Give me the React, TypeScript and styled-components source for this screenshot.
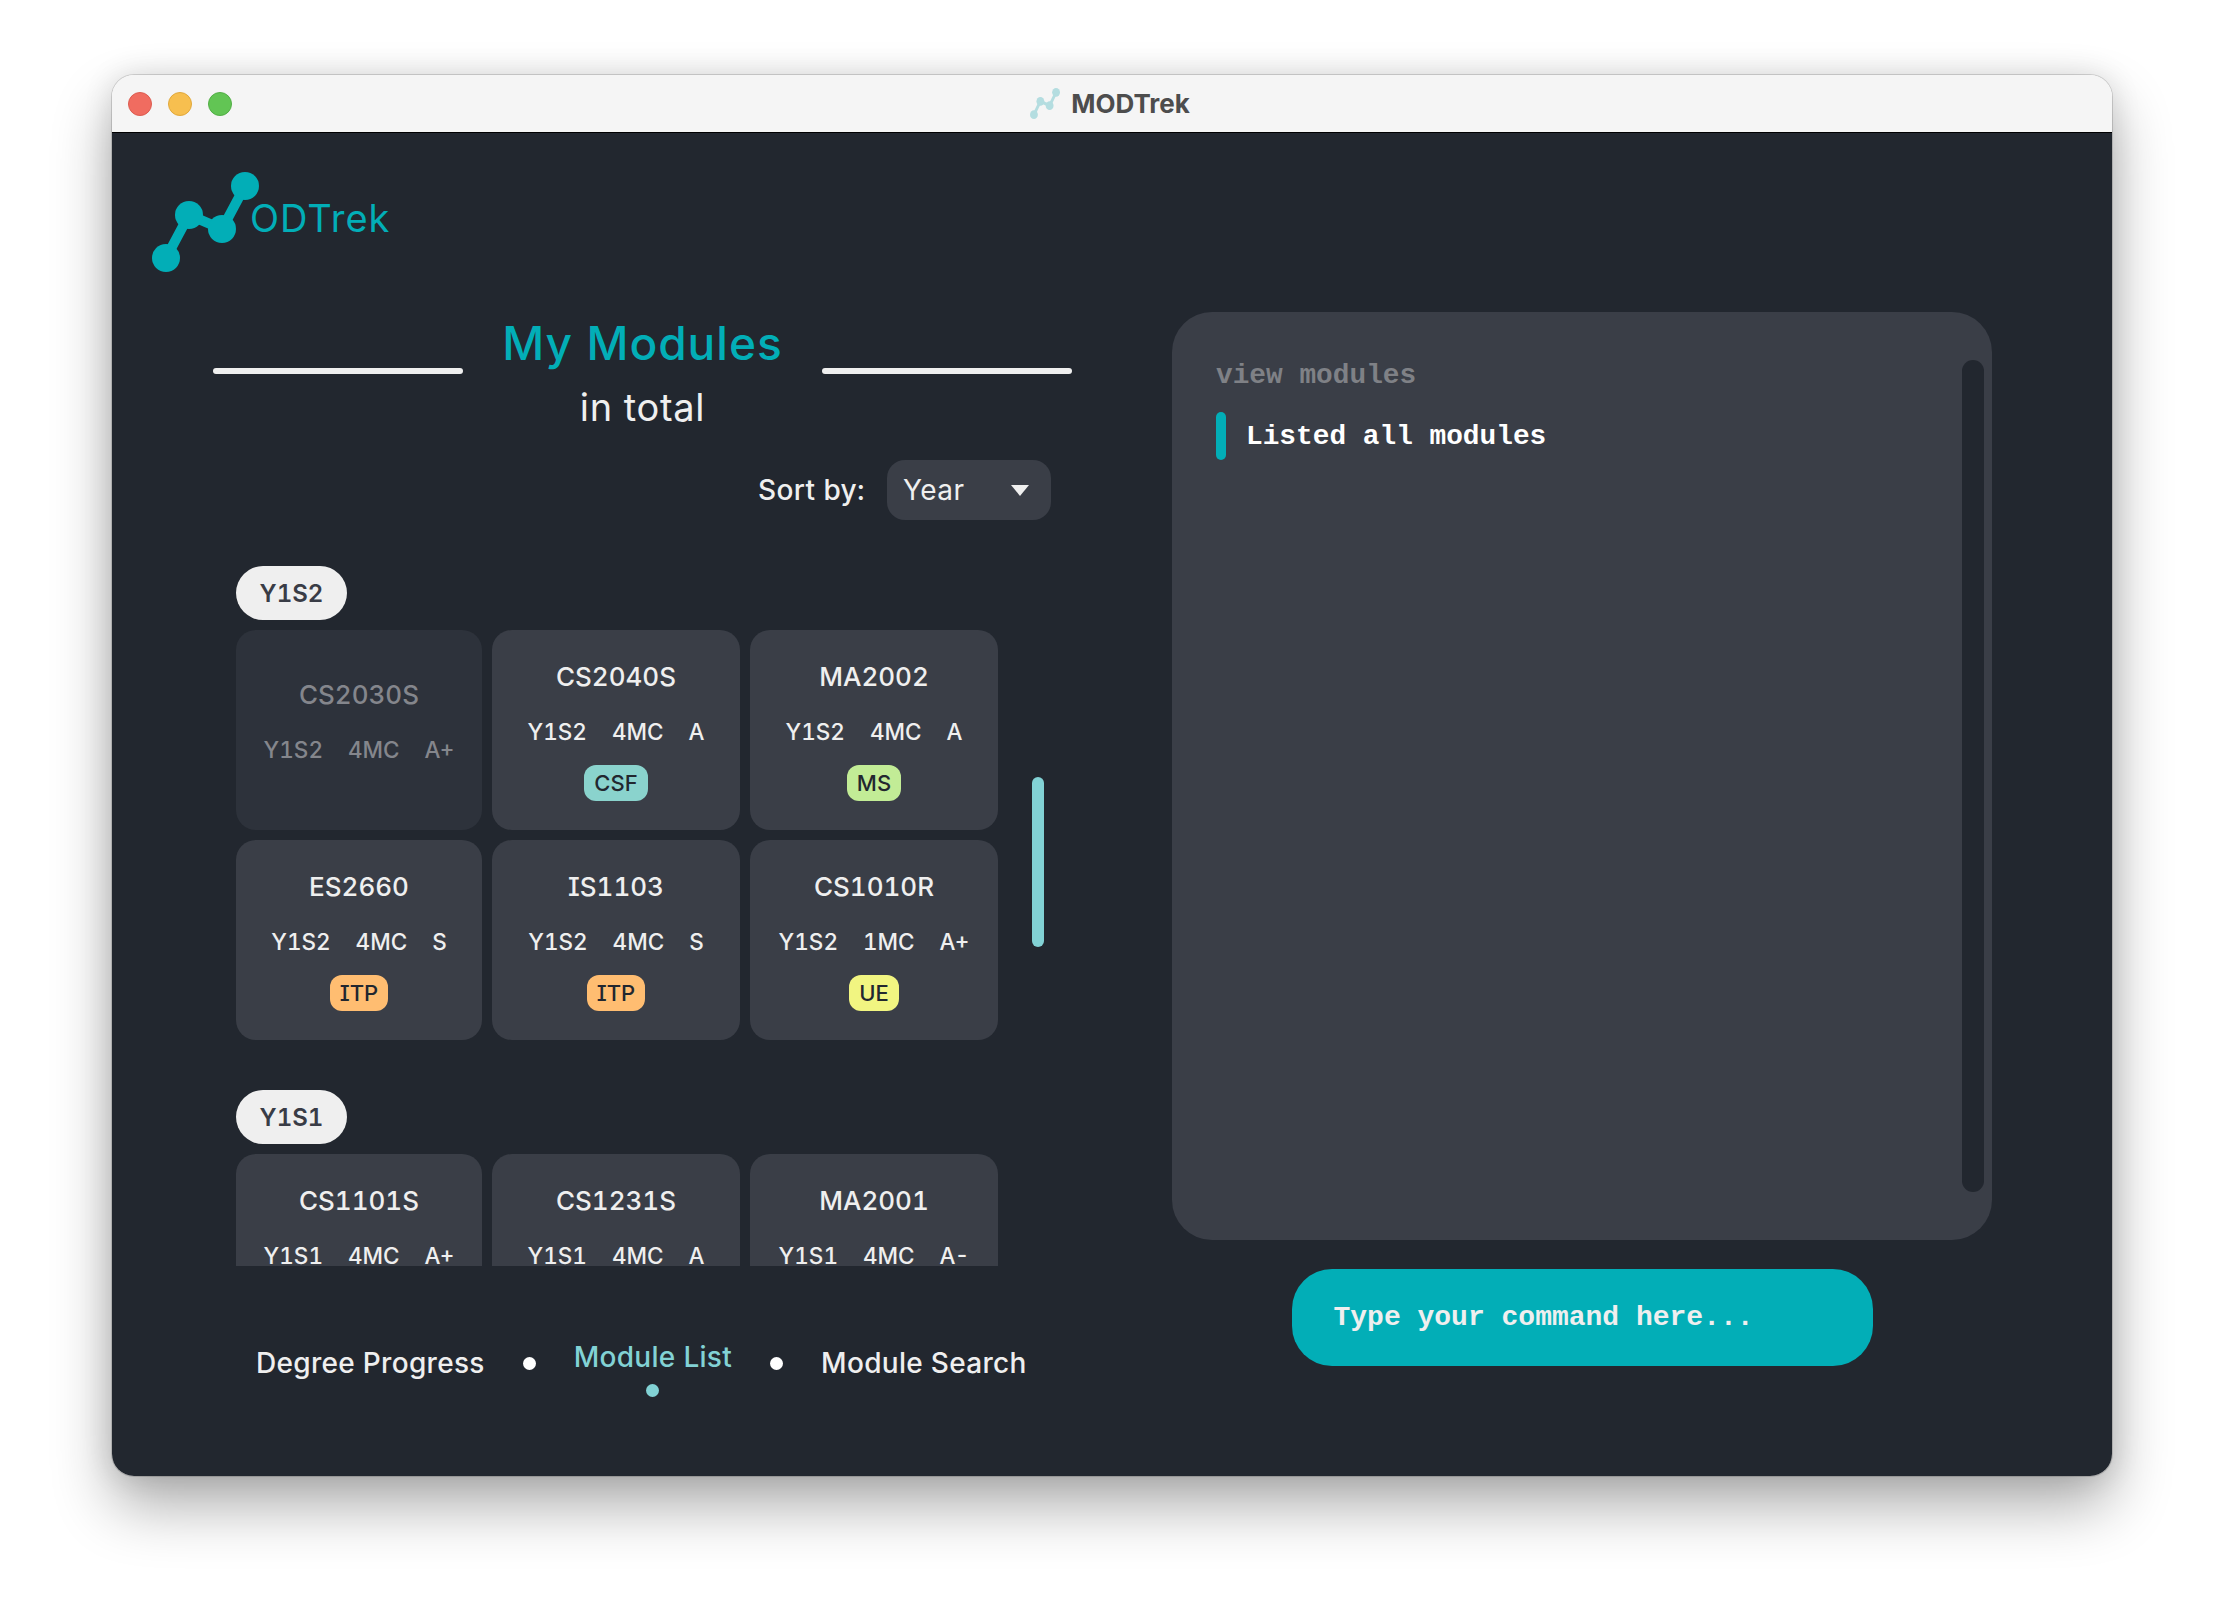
import React from "react";
import styled, { createGlobalStyle } from "styled-components";

const Global = createGlobalStyle`
  html, body { margin: 0; padding: 0; background: #ffffff; }
  body { width: 2224px; height: 1624px; overflow: hidden; font-family: Inter, "Noto Sans", sans-serif; font-feature-settings: "cv08", "tnum"; }
`;

const TEAL = "#02aeb7";
const PALE = "#82d2d5";
const BG = "#22272f";
const PANEL = "#3a3e47";
const MONO = `"Liberation Mono", "Courier New", monospace`;

const Desktop = styled.div`
  padding: 75px 0 0 112px;
`;
const Win = styled.div`
  width: 2000px;
  height: 1401px;
  border-radius: 22px;
  overflow: hidden;
  display: flex;
  flex-direction: column;
  box-shadow: 0 0 0 1px rgba(0, 0, 0, 0.14), 0 30px 60px rgba(0, 0, 0, 0.32), 0 0 30px rgba(0, 0, 0, 0.12);
`;
const TitleBar = styled.div`
  height: 57px;
  flex: none;
  background: #f5f5f5;
  border-bottom: 1px solid #000;
  display: grid;
  grid-template-columns: 1fr auto 1fr;
  align-items: center;
  padding: 0 16px;
`;
const Lights = styled.div`
  display: flex;
  gap: 16px;
`;
const Light = styled.span<{ $c: string; $b: string }>`
  width: 24px;
  height: 24px;
  box-sizing: border-box;
  border-radius: 50%;
  background: ${(p) => p.$c};
  border: 1px solid ${(p) => p.$b};
`;
const WinTitle = styled.div`
  display: flex;
  align-items: center;
  gap: 11px;
  padding-right: 4px;
  font-size: 26px;
  font-weight: 700;
  letter-spacing: 0;
  color: #4d4d4d;
`;
const Body = styled.div`
  flex: 1;
  background: ${BG};
  display: flex;
  min-height: 0;
`;
const LeftPane = styled.div`
  width: 1060px;
  flex: none;
  display: flex;
  flex-direction: column;
`;
const LogoRow = styled.div`
  height: 179px;
  flex: none;
  box-sizing: border-box;
  padding: 39px 0 0 40px;
  display: flex;
  align-items: flex-start;
`;
const LogoText = styled.div`
  font-size: 38px;
  font-weight: 400;
  letter-spacing: 1px;
  color: ${TEAL};
  line-height: 46px;
  margin: 23px 0 0 -9px;
`;
const Hero = styled.div`
  width: 859px;
  margin-left: 101px;
`;
const TitleRow = styled.div`
  display: flex;
  justify-content: space-between;
  align-items: flex-end;
  height: 62px;
`;
const Rule = styled.span`
  width: 250px;
  height: 6px;
  border-radius: 3px;
  background: #efefef;
`;
const Title = styled.h1`
  margin: 0;
  font-size: 46px;
  line-height: 62px;
  font-weight: 500;
  letter-spacing: 1px;
  color: ${TEAL};
`;
const Subtitle = styled.div`
  margin-top: 2px;
  height: 62px;
  line-height: 62px;
  text-align: center;
  font-size: 38px;
  font-weight: 400;
  letter-spacing: 0.7px;
  color: #efefef;
`;
const SortRow = styled.div`
  margin-top: 22px;
  padding-right: 21px;
  display: flex;
  justify-content: flex-end;
  align-items: center;
  gap: 22px;
  font-size: 28px;
  font-weight: 500;
  letter-spacing: 0.4px;
  color: #efefef;
`;
const Select = styled.div`
  width: 164px;
  height: 60px;
  box-sizing: border-box;
  padding: 0 22px 0 16px;
  border-radius: 18px;
  background: ${PANEL};
  display: flex;
  align-items: center;
  justify-content: space-between;
  font-weight: 400;
`;
const Caret = styled.span`
  width: 0;
  height: 0;
  border-left: 9px solid transparent;
  border-right: 9px solid transparent;
  border-top: 11px solid #efefef;
`;
const ScrollArea = styled.div`
  position: relative;
  margin: 46px 0 0 124px;
  height: 700px;
  overflow: hidden;
`;
const Thumb = styled.span`
  position: absolute;
  left: 796px;
  top: 211px;
  width: 12px;
  height: 170px;
  border-radius: 6px;
  background: ${PALE};
`;
const Group = styled.section`
  margin-bottom: 50px;
`;
const YearPill = styled.div`
  width: 111px;
  height: 54px;
  border-radius: 27px;
  background: #efefef;
  color: #393c46;
  font-size: 24px;
  font-weight: 600;
  display: flex;
  align-items: center;
  justify-content: center;
`;
const Grid = styled.div`
  margin-top: 10px;
  display: grid;
  grid-template-columns: 246px 248px 248px;
  grid-auto-rows: 200px;
  gap: 10px;
`;
const Card = styled.article<{ $done?: boolean }>`
  border-radius: 20px;
  background: ${(p) => (p.$done ? "#2d323b" : PANEL)};
  color: ${(p) => (p.$done ? "#84868c" : "#efefef")};
  display: flex;
  flex-direction: column;
  align-items: center;
  padding-top: ${(p) => (p.$done ? "46px" : "28px")};
  box-sizing: border-box;
`;
const Code = styled.div`
  font-size: 26px;
  line-height: 38px;
  font-weight: 500;
  letter-spacing: 0;
`;
const Meta = styled.div`
  margin-top: 16px;
  height: 38px;
  display: flex;
  gap: 25px;
  align-items: center;
  font-size: 22.5px;
  font-weight: 500;
  letter-spacing: 0;
`;
const Tag = styled.span<{ $c: string }>`
  margin-top: 15px;
  height: 36px;
  padding: 0 10px;
  border-radius: 12px;
  background: ${(p) => p.$c};
  color: #22272f;
  font-size: 22px;
  font-weight: 500;
  display: flex;
  align-items: center;
`;
const Tabs = styled.nav`
  margin: 71px 0 0 144px;
  display: flex;
  align-items: flex-start;
  gap: 38px;
`;
const Tab = styled.div<{ $active?: boolean }>`
  display: flex;
  flex-direction: column;
  align-items: center;
  gap: 7px;
  padding-top: ${(p) => (p.$active ? "0" : "6px")};
  font-size: 28px;
  letter-spacing: 0.3px;
  line-height: 40px;
  font-weight: 450;
  color: ${(p) => (p.$active ? PALE : "#efefef")};
`;
const Dot = styled.span<{ $c?: string; $sep?: boolean }>`
  width: 13px;
  height: 13px;
  border-radius: 50%;
  margin-top: ${(p) => (p.$sep ? "20px" : "0")};
  background: ${(p) => p.$c || "#ffffff"};
`;
const RightPane = styled.div`
  width: 820px;
  display: flex;
  flex-direction: column;
  align-items: center;
  padding-top: 179px;
`;
const Console = styled.div`
  position: relative;
  width: 820px;
  height: 928px;
  box-sizing: border-box;
  padding: 47px 44px 0;
  border-radius: 40px;
  background: ${PANEL};
  font-family: ${MONO};
  font-size: 27.8px;
  font-weight: 700;
`;
const ConsoleTrack = styled.span`
  position: absolute;
  top: 48px;
  right: 8px;
  width: 22px;
  height: 832px;
  border-radius: 11px;
  background: ${BG};
`;
const Command = styled.div`
  line-height: 34px;
  color: #7f8186;
`;
const Reply = styled.div`
  margin-top: 19px;
  display: flex;
  align-items: center;
  gap: 20px;
  height: 48px;
  color: #ffffff;
`;
const ReplyBar = styled.span`
  width: 10px;
  height: 48px;
  border-radius: 5px;
  background: ${TEAL};
`;
const CommandInput = styled.div`
  margin-top: 29px;
  width: 581px;
  height: 97px;
  box-sizing: border-box;
  padding-left: 42px;
  border-radius: 40px;
  background: ${TEAL};
  color: #efefef;
  font-family: ${MONO};
  font-size: 28px;
  font-weight: 700;
  display: flex;
  align-items: center;
`;

const Mark = ({ w, h, color }: { w: number; h: number; color: string }) => (
  <svg width={w} height={h} viewBox="0 0 107 100" preserveAspectRatio="none" style={{ flex: "none" }} aria-hidden>
    <path d="M14 86 L37 43 L70 57 L93 14" stroke={color} strokeWidth="10" fill="none" />
    <g fill={color}>
      <circle cx="14" cy="86" r="14" />
      <circle cx="37" cy="43" r="14" />
      <circle cx="70" cy="57" r="14" />
      <circle cx="93" cy="14" r="14" />
    </g>
  </svg>
);

type Mod = { code: string; sem: string; mc: string; grade: string; tag?: string; color?: string; done?: boolean };
const CSF = "#8ad3cd", MS = "#c2ec96", ITP = "#ffbd71", UE = "#f1f581";
const y1s2: Mod[] = [
  { code: "CS2030S", sem: "Y1S2", mc: "4MC", grade: "A+", done: true },
  { code: "CS2040S", sem: "Y1S2", mc: "4MC", grade: "A", tag: "CSF", color: CSF },
  { code: "MA2002", sem: "Y1S2", mc: "4MC", grade: "A", tag: "MS", color: MS },
  { code: "ES2660", sem: "Y1S2", mc: "4MC", grade: "S", tag: "ITP", color: ITP },
  { code: "IS1103", sem: "Y1S2", mc: "4MC", grade: "S", tag: "ITP", color: ITP },
  { code: "CS1010R", sem: "Y1S2", mc: "1MC", grade: "A+", tag: "UE", color: UE },
];
const y1s1: Mod[] = [
  { code: "CS1101S", sem: "Y1S1", mc: "4MC", grade: "A+" },
  { code: "CS1231S", sem: "Y1S1", mc: "4MC", grade: "A" },
  { code: "MA2001", sem: "Y1S1", mc: "4MC", grade: "A-" },
];

const ModuleCard = ({ m }: { m: Mod }) => (
  <Card $done={m.done}>
    <Code>{m.code}</Code>
    <Meta>
      <span>{m.sem}</span>
      <span>{m.mc}</span>
      <span>{m.grade}</span>
    </Meta>
    {m.tag && <Tag $c={m.color!}>{m.tag}</Tag>}
  </Card>
);

export default function App() {
  return (
    <Desktop>
      <Global />
      <Win>
        <TitleBar>
          <Lights>
            <Light $c="#f06c60" $b="#dc5c50" />
            <Light $c="#f7bf4f" $b="#e0a83c" />
            <Light $c="#62c554" $b="#52ae46" />
          </Lights>
          <WinTitle>
            <Mark w={30} h={31} color="#b4dde0" />
            MODTrek
          </WinTitle>
          <span />
        </TitleBar>
        <Body>
          <LeftPane>
            <LogoRow>
              <Mark w={107} h={100} color={TEAL} />
              <LogoText>ODTrek</LogoText>
            </LogoRow>
            <Hero>
              <TitleRow>
                <Rule />
                <Title>My Modules</Title>
                <Rule />
              </TitleRow>
              <Subtitle>in total</Subtitle>
              <SortRow>
                Sort by:
                <Select>
                  Year
                  <Caret />
                </Select>
              </SortRow>
            </Hero>
            <ScrollArea>
              <Thumb />
              <Group>
                <YearPill>Y1S2</YearPill>
                <Grid>
                  {y1s2.map((m) => (
                    <ModuleCard key={m.code} m={m} />
                  ))}
                </Grid>
              </Group>
              <Group>
                <YearPill>Y1S1</YearPill>
                <Grid>
                  {y1s1.map((m) => (
                    <ModuleCard key={m.code} m={m} />
                  ))}
                </Grid>
              </Group>
            </ScrollArea>
            <Tabs>
              <Tab>Degree Progress</Tab>
              <Dot $sep />
              <Tab $active>
                Module List
                <Dot $c={PALE} />
              </Tab>
              <Dot $sep />
              <Tab>Module Search</Tab>
            </Tabs>
          </LeftPane>
          <RightPane>
            <Console>
              <ConsoleTrack />
              <Command>view modules</Command>
              <Reply>
                <ReplyBar />
                Listed all modules
              </Reply>
            </Console>
            <CommandInput>Type your command here...</CommandInput>
          </RightPane>
        </Body>
      </Win>
    </Desktop>
  );
}
